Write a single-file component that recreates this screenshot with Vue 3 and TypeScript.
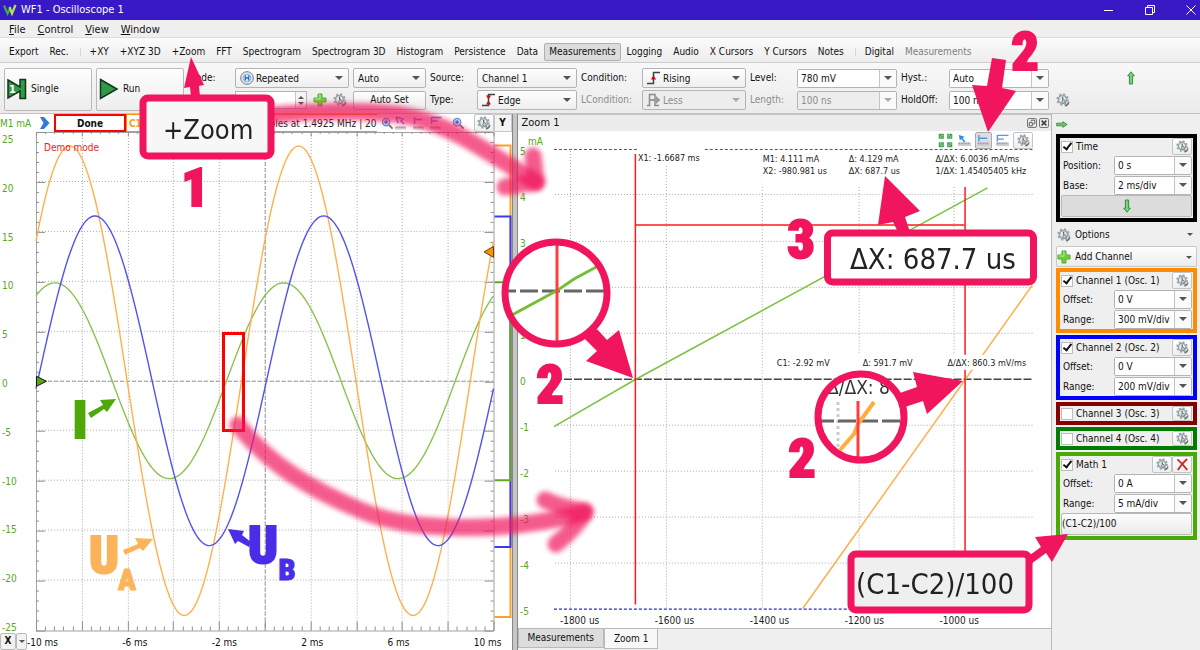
<script setup lang="ts">
import { reactive, ref } from 'vue'

interface Tool { label: string; active?: boolean; muted?: boolean; divider?: boolean }
interface Field { label: string; value: string }
interface Panel {
  id: string
  title: string
  on: boolean
  tone: string
  fields: Field[]
  slim?: boolean
  removable?: boolean
  formula?: string
}

const menus: string[] = ['File', 'Control', 'View', 'Window']
const tools: Tool[] = [
  { label: 'Export' }, { label: 'Rec.' }, { label: '+XY', divider: true }, { label: '+XYZ 3D' },
  { label: '+Zoom' }, { label: 'FFT' }, { label: 'Spectrogram' }, { label: 'Spectrogram 3D' },
  { label: 'Histogram' }, { label: 'Persistence' }, { label: 'Data' },
  { label: 'Measurements', active: true }, { label: 'Logging' }, { label: 'Audio' },
  { label: 'X Cursors' }, { label: 'Y Cursors' }, { label: 'Notes' },
  { label: 'Digital', divider: true }, { label: 'Measurements', muted: true },
]

const time = reactive({ on: true, position: '0 s', base: '2 ms/div' })
const panels = reactive<Panel[]>([
  { id: 'c1', title: 'Channel 1 (Osc. 1)', on: true, tone: 'orange', fields: [{ label: 'Offset:', value: '0 V' }, { label: 'Range:', value: '300 mV/div' }] },
  { id: 'c2', title: 'Channel 2 (Osc. 2)', on: true, tone: 'blue', fields: [{ label: 'Offset:', value: '0 V' }, { label: 'Range:', value: '200 mV/div' }] },
  { id: 'c3', title: 'Channel 3 (Osc. 3)', on: false, tone: 'maroon', fields: [], slim: true },
  { id: 'c4', title: 'Channel 4 (Osc. 4)', on: false, tone: 'green', fields: [], slim: true },
  { id: 'm1', title: 'Math 1', on: true, tone: 'lime', fields: [{ label: 'Offset:', value: '0 A' }, { label: 'Range:', value: '5 mA/div' }], removable: true, formula: '(C1-C2)/100' },
])

const level = ref('780 mV')
const hyst = ref('Auto')
const length = ref('100 ns')
const holdoff = ref('100 ns')

// Main plot: 10 x 10 divisions, origin in the middle.
const PLOT = { left: 36, right: 494, top: 0, bottom: 499, mid: 249 }
const PERIOD = 229

function wave(amplitude: number, peak: number): string {
  const points: string[] = []
  for (let x = PLOT.left; x <= PLOT.right; x += 2) {
    const y = PLOT.mid - amplitude * Math.cos(((x - peak) * 2 * Math.PI) / PERIOD)
    points.push(`${x},${y.toFixed(1)}`)
  }
  return points.join(' ')
}

const waves = [
  { color: '#8cc152', points: wave(98, 284) },
  { color: '#ffb04d', points: wave(235, 299) },
  { color: '#5252f2', points: wave(165, 324) },
]
const columns = Array.from({ length: 9 }, (_, i) => Math.round(PLOT.left + (i + 1) * 45.8) + 0.5)
const rows = Array.from({ length: 9 }, (_, i) => Math.round((i + 1) * 49.9) - 0.5)
const yLabels = Array.from({ length: 11 }, (_, i) => ({ text: String(25 - i * 5), y: 11 + Math.round(i * 48.8) }))
const xLabels = ['-10 ms', '-6 ms', '-2 ms', '2 ms', '6 ms', '10 ms']
const ticksX = Array.from({ length: 51 }, (_, i) => ({ x: Math.round(PLOT.left + i * 9.16) + 0.5, len: i % 5 === 0 ? 9 : 4 }))
const ticksY = Array.from({ length: 51 }, (_, i) => ({ y: Math.round(i * 9.98) + 0.5, len: i % 5 === 0 ? 9 : 3 }))

// Zoomed plot
const zoomCols = [52.5, 148.5, 244.5, 341.5, 436.5]
const zoomRows = [63.5, 110.5, 156.5, 202.5, 294.5, 340.5, 386.5, 432.5]
const zoomY = Array.from({ length: 11 }, (_, i) => ({ text: String(5 - i), y: 24 + i * 46 }))
const zoomX = ['-1800 us', '-1600 us', '-1400 us', '-1200 us', '-1000 us'].map((text, i) => ({ text, x: 42 + i * 95 }))
</script>

<template>
  <div class="window">
    <svg class="sprites" aria-hidden="true">
      <symbol id="gear" viewBox="0 0 14 14">
        <circle cx="6.500" cy="6.500" r="5" fill="none" stroke="#9aa4a8" stroke-width="2.400" stroke-dasharray="2 1.93" />
        <circle cx="6.500" cy="6.500" r="4" fill="#e4e9eb" stroke="#98a4a8" stroke-width="1.600" />
        <path d="M6.500 3.800L7 8" stroke="#59646a" stroke-width="1.200" />
        <circle cx="7.500" cy="8.500" r="1.600" fill="#cfd7da" stroke="#77838a" stroke-width="1" />
        <path d="M9 12.800Q12 12.500 12.800 9" fill="none" stroke="#6b7579" stroke-width="1.500" />
      </symbol>
      <symbol id="plus" viewBox="0 0 14 14">
        <path d="M5 1h4v4h4v4h-4v4h-4v-4h-4v-4h4z" fill="#6fce3d" stroke="#4fae30" stroke-width="1" />
        <path d="M6 2h1v4h-5" fill="none" stroke="#b5ed93" />
      </symbol>
      <symbol id="arrow" viewBox="0 0 8 14">
        <path d="M4 .8L7.300 4.800H5.600V13H2.400V4.800H.7Z" fill="#7bcf7f" stroke="#33913a" stroke-width="1" />
      </symbol>
      <symbol id="lens" viewBox="0 0 14 14">
        <circle cx="5.500" cy="5.500" r="4" fill="#b9d5f5" stroke="#6f93cf" stroke-width="1.400" />
        <path d="M3.500 5.500h4M5.500 3.500v4" stroke="#2b64d8" stroke-width="1.300" />
        <path d="M8.500 8.500l4 4" stroke="#6d747a" stroke-width="2" />
      </symbol>
      <symbol id="ruler" viewBox="0 0 14 4">
        <path d="M0 0h14v4h-14z" fill="#cfcfcf" />
        <path d="M1.500 0v2M3.500 0v2M5.500 0v2M7.500 0v2M9.500 0v2M11.500 0v2" stroke="#8d8d8d" />
      </symbol>
    </svg>

    <header class="titlebar">
      <svg class="logo" viewBox="0 0 14 12" aria-hidden="true">
        <path d="M1 1.500L4.500 9.500L7.500 3.500" fill="none" stroke="#3fae49" stroke-width="2.200" />
        <path d="M6.500 3L9 9.500L12.500 1" fill="none" stroke="#b9e34a" stroke-width="2.200" />
      </svg>
      <h1>WF1 - Oscilloscope 1</h1>
      <div class="window-buttons">
        <button type="button" aria-label="Minimize"><svg viewBox="0 0 10 10"><path d="M0 5.500h9" /></svg></button>
        <button type="button" aria-label="Restore"><svg viewBox="0 0 10 10"><path d="M.5 2.500h7v7h-7zM2.500 2.500v-2h7v7h-2" /></svg></button>
        <button type="button" aria-label="Close"><svg viewBox="0 0 10 10"><path d="M.5 .5l9 9M9.500 .5l-9 9" /></svg></button>
      </div>
    </header>

    <nav class="menubar">
      <button v-for="menu in menus" :key="menu" type="button"><u>{{ menu[0] }}</u>{{ menu.slice(1) }}</button>
    </nav>

    <div class="toolbar">
      <template v-for="(tool, i) in tools" :key="i">
        <span v-if="tool.divider" class="divider"></span>
        <button type="button" :class="{ active: tool.active }" :disabled="tool.muted">{{ tool.label }}</button>
      </template>
    </div>

    <section class="controls">
      <button type="button" class="acquire">
        <svg viewBox="0 0 20 22" aria-hidden="true">
          <path d="M1 2L13 9V1.500H18.500V20.500H13V13L1 20Z" fill="#2f9a47" stroke="#14351b" stroke-width="1.500" />
          <text x="2" y="15" class="one">1</text>
        </svg>Single
      </button>
      <button type="button" class="acquire run">
        <svg viewBox="0 0 20 22" aria-hidden="true">
          <path d="M1.500 1.500L18 11L1.500 20.500Z" fill="#2f9a47" stroke="#14351b" stroke-width="1.500" />
        </svg>Run
      </button>

      <label for="mode">Mode:</label>
      <span class="select">
        <svg class="lead" viewBox="0 0 14 14" aria-hidden="true">
          <circle cx="7" cy="7" r="6.300" fill="#e8eff5" stroke="#6c7a86" />
          <circle cx="7" cy="7" r="4" fill="#d3e6f7" stroke="#8cb4d8" />
          <path d="M5.300 4.500v5M8.700 4.500v5M5.300 7h3.400" stroke="#2c6fb5" stroke-width="1.300" />
        </svg>
        <select id="mode" class="with-icon"><option>Repeated</option></select>
      </span>
      <span class="select"><select aria-label="Trigger mode"><option>Auto</option></select></span>
      <label for="source">Source:</label>
      <span class="select"><select id="source"><option>Channel 1</option></select></span>
      <label for="condition">Condition:</label>
      <span class="select">
        <svg class="lead" viewBox="0 0 14 14" aria-hidden="true">
          <path d="M0 12.500h6.500v-11h6.500" fill="none" stroke="#444" stroke-width="1.500" />
          <path d="M6.500 4l2.500 4.500h-5z" fill="#b3161c" />
        </svg>
        <select id="condition" class="with-icon"><option>Rising</option></select>
      </span>
      <label for="level">Level:</label>
      <span class="combo"><input id="level" v-model="level" type="text" /><button type="button" aria-label="Level values"></button></span>
      <label for="hyst">Hyst.:</label>
      <span class="combo"><input id="hyst" v-model="hyst" type="text" /><button type="button" aria-label="Hysteresis values"></button></span>
      <button type="button" class="collapse" aria-label="Collapse"><svg viewBox="0 0 8 14"><use href="#arrow" /></svg></button>

      <div class="buffer">
        <span class="spin"><input type="text" aria-label="Buffer" /><i class="steps"></i></span>
        <button type="button" class="bare" aria-label="Add buffer"><svg viewBox="0 0 14 14"><use href="#plus" /></svg></button>
        <button type="button" class="bare" aria-label="Buffer settings"><svg viewBox="0 0 14 14"><use href="#gear" /></svg></button>
      </div>
      <button type="button" class="push">Auto Set</button>
      <label for="type">Type:</label>
      <span class="select">
        <svg class="lead" viewBox="0 0 14 14" aria-hidden="true">
          <path d="M0 12.500h6.500v-11h6.500" fill="none" stroke="#444" stroke-width="1.500" />
          <path d="M6.500 6.500l2.500-4h-5zM6.500 7.500l2.500 4h-5z" fill="#b3161c" />
        </svg>
        <select id="type" class="with-icon"><option>Edge</option></select>
      </span>
      <label for="lcondition" class="muted">LCondition:</label>
      <span class="select muted">
        <svg class="lead" viewBox="0 0 14 14" aria-hidden="true">
          <path d="M0 12.500h2.500v-11h5.500v11h4" fill="none" stroke="#8a8a8a" stroke-width="1.500" />
          <path d="M3 6h6v-3l4.500 4l-4.500 4v-3h-6z" fill="#9a9a9a" />
        </svg>
        <select id="lcondition" class="with-icon" disabled><option>Less</option></select>
      </span>
      <label for="length" class="muted">Length:</label>
      <span class="combo muted"><input id="length" v-model="length" type="text" disabled /><button type="button" disabled aria-label="Length values"></button></span>
      <label for="holdoff">HoldOff:</label>
      <span class="combo"><input id="holdoff" v-model="holdoff" type="text" /><button type="button" aria-label="HoldOff values"></button></span>
      <button type="button" class="bare trigger" aria-label="Trigger settings"><svg viewBox="0 0 14 14"><use href="#gear" /></svg></button>
    </section>

    <main class="workspace">
      <section class="scope">
        <div class="scope-head">
          <span class="unit">M1 mA</span>
          <svg class="chevron" viewBox="0 0 10 12" aria-hidden="true"><path d="M0 0h4l5.500 6l-5.500 6h-4l3.500-6z" fill="#2f7be0" /></svg>
          <span class="state">Done</span>
          <span class="sample-info"><b>C1</b><em>samples at 1.4925 MHz | 20</em></span>
          <svg class="tool-icons" viewBox="0 0 96 18" aria-hidden="true">
            <use href="#lens" x="4" y="3" width="13" height="13" />
            <path d="M19 3l7 2l-2 2l3 3M19 3l2 6" stroke="#5a86e0" fill="none" stroke-width="1.500" />
            <use href="#ruler" x="18" y="12" width="11" height="4" />
            <path d="M37.500 3v7M37.500 5.500h8" stroke="#5a86e0" stroke-width="1.500" />
            <use href="#ruler" x="36" y="12" width="11" height="4" />
            <path d="M54.500 3v7M54.500 3.500h10M54.500 7h6" stroke="#5a86e0" stroke-width="1.500" />
            <use href="#ruler" x="53" y="12" width="11" height="4" />
            <use href="#lens" x="75" y="3" width="13" height="13" />
          </svg>
          <button type="button" class="boxed" aria-label="Plot settings"><svg viewBox="0 0 14 14"><use href="#gear" /></svg></button>
          <button type="button" class="axis-button">Y</button>
        </div>

        <svg class="plot" viewBox="0 0 512 500">
          <g class="grid">
            <path v-for="x in columns" :key="'c' + x" :d="`M${x} 0V499`" />
            <path v-for="y in rows" :key="'r' + y" :d="`M36 ${y}H494`" />
          </g>
          <path class="zero" d="M265.500 0V499M36 249.500H494" />
          <path class="frame" d="M36.500 499.500V.5H494.500V499.500Z" />
          <g class="ticks">
            <path v-for="t in ticksX" :key="'x' + t.x" :d="`M${t.x} 0v${t.len / 2}M${t.x} 499v-${t.len}`" />
            <path v-for="t in ticksY" :key="'y' + t.y" :d="`M36 ${t.y}h${t.len}M494 ${t.y}h-${t.len}`" />
          </g>
          <polyline v-for="w in waves" :key="w.color" :points="w.points" :stroke="w.color" class="wave" />
          <path d="M36.500 244.500L46.500 249.500L36.500 254.500Z" fill="#56ab0a" stroke="#111" />
          <path d="M494 114.500L484.500 120L494 125.500Z" fill="#ff9100" stroke="#5a4020" />
          <g class="histogram">
            <path d="M495 13.500H511V485.500H495" stroke="#ffa02a" />
            <path d="M495 84.500H511V415.500H495" stroke="#3a3af0" />
            <path d="M495 150.500H511V348.500H495" stroke="#62a828" />
          </g>
          <text x="44" y="19" class="demo">Demo mode</text>
          <text v-for="l in yLabels" :key="l.text" x="2" :y="l.y" class="green-text">{{ l.text }}</text>
        </svg>

        <div class="time-axis">
          <button type="button">X</button>
          <button type="button" class="drop" aria-label="X axis options"></button>
          <div class="time-labels"><span v-for="l in xLabels" :key="l">{{ l }}</span></div>
        </div>
      </section>

      <div class="splitter"></div>

      <section class="zoom">
        <div class="zoom-head">
          <h2>Zoom 1</h2>
          <button type="button" aria-label="Float"><svg viewBox="0 0 10 10"><path d="M1.500 4.500h4v4h-4zM4 3v-1.500h4.500v4.500h-2" /></svg></button>
          <button type="button" aria-label="Close zoom"><svg viewBox="0 0 10 10"><path d="M2 2l6 6M8 2l-6 6" stroke-width="2" /></svg></button>
        </div>
        <div class="zoom-tools">
          <svg class="expand" viewBox="0 0 16 16" aria-hidden="true">
            <g fill="#bfe3bf" stroke="#4aa556" stroke-width="1.500">
              <path d="M1.500 1.500h4v4h-4zM10.500 1.500h4v4h-4zM1.500 10.500h4v4h-4zM10.500 10.500h4v4h-4z" />
              <path d="M2 2l3 3M14 2l-3 3M2 14l3-3M14 14l-3-3" />
            </g>
          </svg>
          <button type="button" aria-label="Pointer"><svg viewBox="0 0 14 14"><path d="M1 1l6 2l-2 1.500l3 3.500l-1.500 1l-3-3.500l-1.500 1.500z" fill="#2d8be8" /><use href="#ruler" y="9" width="14" height="4" /></svg></button>
          <button type="button" class="pressed" aria-label="Horizontal cursor"><svg viewBox="0 0 14 14"><path d="M2 1v7M2 4.500h9" stroke="#4a9bec" stroke-width="1.500" /><use href="#ruler" y="9" width="14" height="4" /></svg></button>
          <button type="button" aria-label="Vertical cursor"><svg viewBox="0 0 14 14"><path d="M1.500 1v7M1.500 1.500h12M1.500 5.500h7" stroke="#4a9bec" stroke-width="1.500" /><use href="#ruler" y="9" width="14" height="4" /></svg></button>
          <button type="button" class="boxed" aria-label="Zoom settings"><svg viewBox="0 0 14 14"><use href="#gear" /></svg></button>
        </div>

        <svg class="plot" viewBox="0 0 534 497">
          <text x="10" y="14" class="green-text">mA</text>
          <g class="grid">
            <path v-for="x in zoomCols" :key="'c' + x" :d="`M${x} 20V478`" />
            <path v-for="y in zoomRows" :key="'r' + y" :d="`M37 ${y}H515`" />
          </g>
          <path class="top-limit" d="M36 18.500H119M187 18.500H515" />
          <path class="zoom-zero" d="M36 248.500H515" />
          <path class="bottom-limit" d="M36 478.500H515" />
          <path d="M36 296L117 249L470 57" class="trace" stroke="#7cc142" />
          <path d="M285 478L515 154" class="trace" stroke="#ffae4a" />
          <g class="marker-lines">
            <path d="M117.500 23V474" />
            <path d="M447.500 56V473" />
            <path d="M117 94H447" />
          </g>
          <g fill="#fff">
            <path d="M119 20h70v14h-70zM244 20h275v35h-275zM256 224h262v15h-262z" />
          </g>
          <g class="readout">
            <text x="120" y="30">X1: -1.6687 ms</text>
            <text x="245" y="31">M1: 4.111 mA</text>
            <text x="245" y="43">X2: -980.981 us</text>
            <text x="331" y="31">Δ: 4.129 mA</text>
            <text x="331" y="43">ΔX: 687.7 us</text>
            <text x="418" y="31">Δ/ΔX: 6.0036 mA/ms</text>
            <text x="418" y="43">1/ΔX: 1.45405405 kHz</text>
            <text x="259" y="235">C1: -2.92 mV</text>
            <text x="345" y="235">Δ: 591.7 mV</text>
            <text x="430" y="235">Δ/ΔX: 860.3 mV/ms</text>
          </g>
          <text v-for="l in zoomY" :key="l.text" x="2" :y="l.y" class="green-text">{{ l.text }}</text>
          <text v-for="l in zoomX" :key="l.text" :x="l.x" y="493" class="axis-text">{{ l.text }}</text>
        </svg>

        <div class="tabs">
          <button type="button">Measurements</button>
          <button type="button" class="current">Zoom 1</button>
        </div>
      </section>

      <aside class="side">
        <button type="button" class="hide" aria-label="Hide panel"><svg viewBox="0 0 14 8"><path d="M.8 2.400H8V.7L13 4L8 7.300V5.600H.8Z" fill="#6cc46f" stroke="#33913a" /></svg></button>

        <div class="card black">
          <div class="card-head">
            <input id="time-on" v-model="time.on" type="checkbox" />
            <label for="time-on">Time</label>
            <button type="button" class="boxed" aria-label="Time settings"><svg viewBox="0 0 14 14"><use href="#gear" /></svg></button>
          </div>
          <div class="row">
            <label for="time-position">Position:</label>
            <span class="combo"><input id="time-position" v-model="time.position" type="text" /><button type="button" aria-label="Position values"></button></span>
          </div>
          <div class="row">
            <label for="time-base">Base:</label>
            <span class="combo"><input id="time-base" v-model="time.base" type="text" /><button type="button" aria-label="Base values"></button></span>
          </div>
          <button type="button" class="wide more" aria-label="More"><svg viewBox="0 0 8 14"><use href="#arrow" /></svg></button>
        </div>

        <button type="button" class="entry options"><svg viewBox="0 0 14 14"><use href="#gear" /></svg>Options</button>
        <button type="button" class="entry add"><svg viewBox="0 0 14 14"><use href="#plus" /></svg>Add Channel</button>

        <div class="stack">
          <div v-for="p in panels" :key="p.id" class="card" :class="[p.tone, { slim: p.slim }]">
            <div class="card-head">
              <input :id="p.id + '-on'" v-model="p.on" type="checkbox" />
              <label :for="p.id + '-on'">{{ p.title }}</label>
              <button type="button" class="boxed" :aria-label="p.title + ' settings'"><svg viewBox="0 0 14 14"><use href="#gear" /></svg></button>
              <button v-if="p.removable" type="button" class="boxed" :aria-label="'Remove ' + p.title"><svg viewBox="0 0 14 14"><path d="M1.500 1.500Q7 6 12 13M12 1Q6 6 2 13" fill="none" stroke="#cf2424" stroke-width="2" /></svg></button>
            </div>
            <div v-for="f in p.fields" :key="f.label" class="row">
              <label :for="p.id + f.label">{{ f.label }}</label>
              <span class="combo"><input :id="p.id + f.label" v-model="f.value" type="text" /><button type="button" :aria-label="f.label + ' values'"></button></span>
            </div>
            <button v-if="p.formula" type="button" class="wide formula">{{ p.formula }}</button>
          </div>
        </div>
      </aside>
    </main>

    <svg class="notes" viewBox="0 0 1200 650">
      <defs>
        <filter id="soft" filterUnits="userSpaceOnUse" x="0" y="0" width="1200" height="650"><feGaussianBlur stdDeviation="2.500" /></filter>
        <filter id="magnified"><feGaussianBlur stdDeviation=".6" /></filter>
        <clipPath id="lens-a"><circle cx="556" cy="293" r="50" /></clipPath>
        <clipPath id="lens-b"><circle cx="861" cy="417" r="43" /></clipPath>
      </defs>

      <rect x="223.500" y="333.500" width="20" height="97" fill="none" stroke="#f00" stroke-width="3" />

      <g class="brush">
        <path d="M270 115C320 110 380 110 412 117C455 127 490 154 536 182" filter="url(#soft)" />
        <path d="M533 156L536 182L505 187" filter="url(#soft)" />
        <path d="M238 425C270 465 310 489 360 510C390 523 420 526 450 527C510 530 560 519 584 513" filter="url(#soft)" />
        <path d="M545 500Q565 509 585 511Q578 526 556 544" filter="url(#soft)" />
      </g>

      <circle cx="556" cy="293" r="50" fill="#fff" />
      <g clip-path="url(#lens-a)" fill="none" stroke-width="3" filter="url(#magnified)">
        <path d="M498 291H612" stroke="#666" stroke-dasharray="18 4" />
        <path d="M512 315L558 290L574 279L600 265" stroke="#74bf38" />
        <path d="M557 240V346" stroke="#ff3d3d" />
      </g>
      <circle cx="556" cy="293" r="51" class="ring" />

      <circle cx="861" cy="417" r="43" fill="#fff" />
      <g clip-path="url(#lens-b)" fill="none" stroke-width="3" filter="url(#magnified)">
        <text x="827" y="394" class="lens-text">Δ/ΔX: 8</text>
        <path d="M838 402V460" stroke="#ccc" stroke-dasharray="3 3" />
        <path d="M816 421H906" stroke="#666" stroke-dasharray="18 4" />
        <path d="M874 402L858 424L854 434L840 450" stroke="#ffae3d" stroke-width="4" />
        <path d="M858 401V462" stroke="#ff3d3d" />
      </g>
      <circle cx="861" cy="417" r="43" class="ring" />

      <g class="callout">
        <rect x="143" y="98" width="128" height="58" rx="5" />
        <rect x="827.500" y="233" width="206" height="49" rx="5" class="white" />
        <rect x="851" y="554" width="178" height="56" rx="5" class="grey" />
      </g>
      <g class="callout-text" filter="url(#magnified)">
        <text x="163" y="139" class="smaller">+Zoom</text>
        <text x="850" y="269">ΔX: 687.7 us</text>
        <text x="856" y="594">(C1-C2)/100</text>
      </g>

      <g fill="#f0155c">
        <path d="M191 57L204 85L199 86L200 97H191L190 87L184 88Z" />
        <path d="M992 58L1006 60L1002 88L1016 91L988 132L972 85L987 86Z" />
        <path d="M885 176L920 211L905 217L910 232H898L893 222L878 225Z" />
        <path d="M597 329L607 340L619 330L633 378L586 361L597 351L584 338Z" />
        <path d="M900 393L917 387L913 372L963 381L927 414L923 401L905 407Z" />
        <path d="M1030 555L1041 547L1035 537L1068 534L1052 562L1046 553L1031 564Z" />
      </g>
      <g class="digit">
        <text x="195" y="206">1</text>
        <text x="1025" y="70">2</text>
        <text x="801" y="258">3</text>
        <text x="550" y="403">2</text>
        <text x="802" y="477">2</text>
      </g>

      <g class="signal">
        <g class="i"><text x="80" y="438">I</text><path d="M88 413L103 405L100 400L116 399L107 412L104 409L91 418Z" /></g>
        <g class="ua"><text x="104" y="573">U</text><text x="127" y="590" class="sub">A</text><path d="M123 550L138 544L135 538L153 539L143 551L140 548L125 555Z" /></g>
        <g class="ub"><text x="263" y="563">U</text><text x="287" y="580" class="sub">B</text><path d="M228 529L244 531L242 535L251 542L249 547L238 541L235 544Z" /></g>
      </g>
    </svg>
  </div>
</template>

<style>
html, body { margin: 0; background: #f0f0f0; }
</style>

<style scoped>
.window {
  position: relative;
  display: flex;
  flex-direction: column;
  min-height: 100vh;
  overflow: hidden;
  background: #f0f0f0;
  color: #111;
  font-family: Tahoma, "DejaVu Sans Condensed", "DejaVu Sans", sans-serif;
  font-size: 10px;
  line-height: 12px;
}
* { box-sizing: border-box; }
button, input, select { font: inherit; color: inherit; margin: 0; padding: 0; min-width: 0; }
button { background: none; border: 0; }
button svg { display: block; }
.sprites { position: absolute; width: 0; height: 0; }

.titlebar { display: flex; align-items: center; height: 20px; padding-left: 3px; background: #371ac6; color: #fff; }
.titlebar h1 { flex: 1; margin: 0; padding-left: 4px; font-size: 11px; font-weight: 400; }
.logo { width: 14px; height: 12px; }
.window-buttons { display: flex; gap: 31px; padding-right: 4px; }
.window-buttons svg { width: 10px; height: 10px; fill: none; stroke: #fff; }

.menubar { display: flex; align-items: center; gap: 12px; height: 18px; padding: 2px 0 0 9px; background: #efefef; border-bottom: 1px solid #dcdcdc; font-size: 11px; }

.toolbar { display: flex; align-items: center; gap: 11px; height: 25px; padding: 3px 0 0 9px; white-space: nowrap; background: linear-gradient(#fbfbfb, #ededed); border-bottom: 1px solid #cdcdcd; }
.toolbar .active { height: 18px; padding: 0 4px; margin: 0 -5px; background: #dcdcdc; border: 1px solid #b0b0b0; border-radius: 2px; }
.toolbar button:disabled { color: #7e7e7e; }
.divider { width: 1px; height: 8px; margin-right: -2px; background: #d6d6d6; }

.controls {
  display: grid;
  grid-template-columns: 88px 88px 43px 114px 73px 43px 100px 57px 104px 43px 100px 44px 100px 1fr;
  grid-template-rows: 20px 20px;
  gap: 2px 4px;
  align-items: center;
  padding: 5px 4px 3px;
  background: linear-gradient(#f8f8f8, #ebebeb);
  border-bottom: 1px solid #c2c2c2;
}
.controls > label { white-space: nowrap; }
.acquire { grid-row: 1 / 3; height: 43px; display: flex; align-items: center; gap: 4px; padding-left: 2px; background: linear-gradient(#fefefe, #ededed); border: 1px solid #b9b9b9; border-radius: 2px; }
.acquire svg { width: 20px; height: 22px; }
.one { font-size: 11px; font-weight: 700; fill: #fff; }
.select { position: relative; display: flex; height: 20px; }
.select::after, .combo button::after, .drop::after, .entry::after {
  content: ""; border: 4px solid transparent; border-top: 4px solid #555; border-bottom: 0;
}
.select::after { position: absolute; right: 6px; top: 8px; pointer-events: none; }
.select select { width: 100%; padding: 1px 0 0 4px; appearance: none; background: linear-gradient(#fefefe, #efefef); border: 1px solid #b4b4b4; border-radius: 2px; }
.select .with-icon { padding-left: 20px; }
.lead { position: absolute; left: 5px; top: 3px; width: 14px; height: 14px; }
.muted, .muted select, .muted input { color: #8c8c8c; opacity: 1; }
.select.muted select, .combo.muted, .combo.muted input { background: #ededed; }
.select.muted::after, .combo.muted button::after { border-top-color: #aaa; }
.combo { display: flex; height: 19px; background: #fff; border: 1px solid #b4b4b4; border-radius: 2px; }
.combo input { flex: 1; width: 0; padding: 2px 0 0 3px; background: #fff; border: 0; }
.combo button { display: grid; place-items: center; width: 17px; background: #fafafa; border-left: 1px solid #c4c4c4; }
.buffer { grid-column: 4; display: flex; align-items: center; gap: 6px; }
.spin { display: flex; width: 72px; height: 18px; background: #fff; border: 1px solid #b4b4b4; }
.spin input { flex: 1; width: 0; border: 0; background: #fff; }
.steps { display: flex; flex-direction: column; align-items: center; justify-content: center; gap: 3px; width: 11px; border-left: 1px solid #c4c4c4; background: #f4f4f4; }
.steps::before { content: ""; border: 3px solid transparent; border-top: 0; border-bottom: 3px solid #555; }
.steps::after { content: ""; border: 3px solid transparent; border-bottom: 0; border-top: 3px solid #555; }
.bare { width: 14px; height: 14px; }
.trigger { margin-left: 3px; }
.bare svg { width: 14px; height: 14px; }
.push { height: 19px; background: linear-gradient(#fefefe, #eaeaea); border: 1px solid #b4b4b4; border-radius: 2px; }
.collapse { justify-self: center; padding-left: 12px; }
.collapse svg { width: 8px; height: 14px; }

.workspace { flex: 1; display: flex; background: #fff; }
.scope { flex: 512 1 0; min-width: 0; display: flex; flex-direction: column; background: #fff; }
.scope-head { display: flex; align-items: stretch; height: 18px; background: #fff; }
.unit { width: 40px; padding-top: 4px; color: #56a51c; }
.chevron { width: 10px; height: 12px; margin: 3px 4px 0 0; }
.state { width: 72px; border: 2px solid #f00; text-align: center; font-weight: 700; line-height: 16px; }
.sample-info { flex: 1; display: flex; justify-content: space-between; padding-left: 2px; border: 1px solid #ff9100; border-right: 0; white-space: nowrap; line-height: 18px; color: #222; }
.sample-info b { color: #ff9a1f; }
.sample-info em { font-style: normal; }
.tool-icons { width: 96px; height: 18px; margin-right: 1px; }
.boxed { display: grid; place-items: center; width: 20px; background: linear-gradient(#fff, #eee); border: 1px solid #c4c4c4; border-radius: 2px; }
.boxed svg { width: 14px; height: 14px; }
.axis-button { width: 18px; background: #f4f4f4; border: 1px solid #c8c8c8; font-weight: 700; }
.plot { display: block; width: 100%; height: auto; overflow: visible; }
.grid path { fill: none; stroke: #a8a8a8; stroke-dasharray: 1 2; }
.zero { fill: none; stroke: #999; stroke-dasharray: 4 2; }
.frame { fill: none; stroke: #a2a2a2; }
.ticks path { stroke: #8f8f8f; }
.wave { fill: none; stroke-width: 1.400px; }
.histogram path { fill: none; stroke-width: 2px; }
.trace { fill: none; stroke-width: 1.500px; }
.marker-lines path { fill: none; stroke: #ff1a1a; stroke-width: 1.500px; }
.demo { fill: #f01a1a; }
.green-text { fill: #56a51c; }
.axis-text { fill: #222; }
.readout { fill: #222; font-size: 9px; }
.top-limit { stroke: #555; stroke-dasharray: 3 2; }
.zoom-zero { stroke: #444; stroke-width: 1.300px; stroke-dasharray: 8 2; }
.bottom-limit { stroke: #2a2ad0; stroke-width: 1.300px; stroke-dasharray: 3 2; }
.time-axis { display: flex; height: 18px; padding-top: 1px; }
.time-axis button { width: 16px; background: #f2f2f2; border: 1px solid #bbb; border-radius: 2px; font-weight: 700; }
.time-axis .drop { display: grid; place-items: center; width: 11px; }
.drop::after { border-width: 3px 3px 0; }
.time-labels { flex: 1; display: flex; justify-content: space-between; padding: 4px 10px 0 0; }

.splitter { width: 6px; background: #c6c6c6; border-left: 1px solid #888; border-right: 1px solid #888; }
.zoom { flex: 534 1 0; min-width: 0; display: flex; flex-direction: column; position: relative; background: #fff; border-right: 1px solid #b9b9b9; }
.zoom-head { display: flex; align-items: center; gap: 2px; height: 17px; padding: 0 2px 0 4px; background: #ececec; border-top: 1px solid #c4c4c4; }
.zoom-head h2 { flex: 1; margin: 0; font-size: 11px; font-weight: 400; }
.zoom-head button { width: 10px; height: 10px; border: 1px solid #777; border-radius: 2px; }
.zoom-head svg { width: 8px; height: 8px; fill: none; stroke: #444; }
.zoom-tools { position: absolute; right: 18px; top: 18px; display: flex; align-items: center; gap: 2px; height: 17px; }
.zoom-tools button { display: grid; place-items: center; width: 17px; height: 17px; }
.zoom-tools svg { width: 13px; height: 13px; }
.zoom-tools .expand { width: 15px; height: 15px; margin-right: 1px; }
.zoom-tools .pressed { background: #dedede; border: 1px solid #aaa; border-radius: 2px; }
.zoom-tools .boxed { width: 20px; }
.tabs { flex: 1; display: flex; align-items: flex-start; min-height: 21px; background: #efefef; border-top: 1px solid #b9b9b9; }
.tabs button { height: 19px; padding: 1px 9px 0; background: #dcdcdc; border: 1px solid #b9b9b9; border-top: 0; }
.tabs .current { height: 20px; background: #f8f8f8; }

.side { width: 148px; padding: 0 3px 0 4px; display: flex; flex-direction: column; background: #efefef; }
.hide { height: 20px; text-align: left; }
.hide svg { width: 12px; height: 7px; }
.card { padding: 0 1px; border: 4px solid #000; background: #efefef; }
.orange { border-color: #ff8c00; }
.blue { border-color: #00f; }
.maroon { border-color: #860000; }
.green { border-color: #007d00; }
.lime { border-color: #4aaa05; }
.stack { display: flex; flex-direction: column; gap: 2px; }
.card-head { display: flex; align-items: center; height: 17px; }
.slim .card-head { height: 15px; }
.card-head label { flex: 1; padding: 1px 0 0 3px; white-space: nowrap; }
.card-head .boxed { height: 100%; }
.card-head .boxed svg { width: 13px; height: 13px; }
.card-head input { appearance: none; width: 12px; height: 12px; background: #fff; border: 1px solid #bdbdbd; display: grid; place-items: center; }
.card-head input:checked::after { content: ""; width: 3px; height: 7px; margin-top: -2px; border: solid #111; border-width: 0 2px 2px 0; transform: rotate(38deg); }
.row { display: flex; align-items: center; height: 20px; }
.row label { width: 53px; padding: 1px 0 0 2px; }
.row .combo { flex: 1; }
.wide { display: grid; place-items: center; width: 100%; height: 22px; background: #dcdcdc; border: 1px solid #b9b9b9; border-radius: 2px; }
.card > .wide { margin-bottom: 1px; }
.more svg { width: 8px; height: 14px; transform: rotate(180deg); }
.formula { place-items: center start; background: linear-gradient(#fdfdfd, #eaeaea); }
.entry { display: flex; align-items: center; gap: 4px; padding: 1px 4px 0 1px; }
.entry svg { width: 14px; height: 14px; }
.entry::after { margin-left: auto; border-width: 3px 3px 0; }
.options { height: 24px; }
.add { height: 21px; margin-bottom: 1px; padding-left: 0; background: linear-gradient(#fefefe, #ececec); border: 1px solid #c8c8c8; border-radius: 2px; }

.notes { position: absolute; left: 0; top: 0; width: 100%; height: auto; pointer-events: none; }
.brush path { fill: none; stroke: #f0155c; stroke-width: 17px; stroke-linecap: round; stroke-linejoin: round; opacity: .7; }
.ring { fill: none; stroke: #f0155c; stroke-width: 7px; }
.callout rect { fill: #f7f7f7; stroke: #f0155c; stroke-width: 7px; }
.callout .grey { fill: #efefef; }
.callout .white { fill: #fff; }
.callout-text { font-size: 29px; fill: #222; }
.callout-text .smaller { font-size: 27px; }
.lens-text { font-size: 19px; fill: #333; }
.digit, .signal { font-family: Impact, "Liberation Sans Narrow", "Roboto Condensed", Roboto, sans-serif; font-size: 54px; font-weight: 900; text-anchor: middle; }
.digit { fill: #f0155c; stroke: #f0155c; stroke-width: 2px; }
.signal { font-size: 52px; }
.signal text { stroke-width: 2px; }
.i { fill: #4fa80a; stroke: #4fa80a; }
.ua { fill: #fbb45c; stroke: #fbb45c; }
.ub { fill: #4b2de8; stroke: #4b2de8; }
.signal path { stroke: none; }
.signal .sub { font-size: 30px; stroke-width: 1px; }
</style>
